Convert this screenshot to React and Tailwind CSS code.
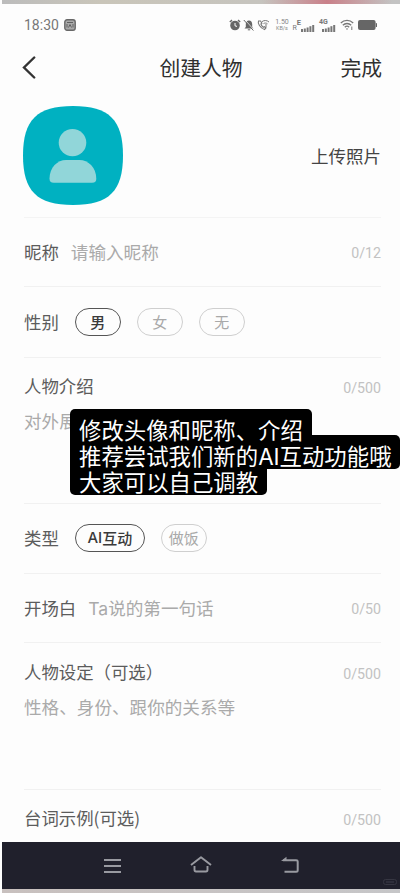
import React from 'react';
import clsx from 'clsx';

const Chip = ({ children, active, className }) => (
  <button
    className={clsx(
      'flex h-[28px] items-center justify-center rounded-full border text-[15px] leading-none',
      active ? 'border-[#555] font-medium text-[#3a3a3a]' : 'border-[#cfcfcf] text-[#a9a9a9]',
      className
    )}
  >
    {children}
  </button>
);

const Label = ({ children }) => (
  <span className="text-[17.4px] leading-[26px] whitespace-nowrap text-[#5c5c5c]">{children}</span>
);

const Placeholder = ({ children }) => (
  <span className="text-[17.6px] leading-[26px] whitespace-nowrap text-[#aaa]">{children}</span>
);

const Counter = ({ children }) => (
  <span className="mt-[2px] ml-auto font-['Roboto','Noto_Sans_CJK_SC',sans-serif] text-[14.2px] leading-[26px] text-[#c2c2c2]">
    {children}
  </span>
);

const Latin = ({ children }) => (
  <span className="font-['Inter',sans-serif] leading-none">{children}</span>
);

const Signal = () => (
  <svg width="14" height="7" viewBox="0 0 14 7" fill="#777">
    <rect x="0" y="4" width="2" height="3" />
    <rect x="2.8" y="3.5" width="2" height="3.5" />
    <rect x="5.6" y="2.5" width="2" height="4.5" />
    <rect x="8.4" y="1.2" width="2" height="5.8" />
    <rect x="11.2" y="0" width="2" height="7" />
  </svg>
);

const StatusBar = () => (
  <div className="flex h-[42px] items-center pr-[23px] pl-[22px] font-['Roboto',sans-serif] text-[#777]">
    <span className="w-[35px] text-[14px] leading-none">18:30</span>
    <svg className="ml-[5px]" width="12" height="12" viewBox="0 0 12 12" fill="none">
      <rect x="0.8" y="0.8" width="10.4" height="10.4" rx="2.2" fill="#aaa" stroke="#686868" strokeWidth="1.4" />
      <path d="M3 3.5h6M3 5v3.5M9 5v3.5M4.5 8.5L6 5.5l1.5 3" stroke="#606060" strokeWidth="1" />
    </svg>

    <div className="ml-auto flex items-center">
      {/* alarm */}
      <svg width="12" height="12" viewBox="0 0 12 12" fill="none">
        <circle cx="6" cy="6.5" r="4.8" fill="#666" />
        <path d="M0.8 3L3 1.1M11.2 3L9 1.1" stroke="#666" strokeWidth="1.4" />
        <path d="M6 4v2.8l2 .6" stroke="#fff" strokeWidth="1" />
      </svg>
      {/* muted bell */}
      <svg className="ml-[2px]" width="12" height="12" viewBox="0 0 12 12" fill="none">
        <path d="M1.5 9.5L2.8 8V5C2.8 3 4 1.7 6 1.5 8 1.7 9.2 3 9.2 5v3l1.3 1.5z" fill="#666" />
        <path d="M4.8 10.8h2.4" stroke="#666" strokeWidth="1" />
        <path d="M1.6 0.5L11 11" stroke="#fff" strokeWidth="0.8" />
        <path d="M0.8 1L10.4 11.5" stroke="#666" strokeWidth="1" />
      </svg>
      {/* call over wifi */}
      <svg className="ml-[2px]" width="13" height="12" viewBox="0 0 13 12" fill="none" stroke="#777">
        <path d="M1.5 2C.5 4 3 9 7.5 10.5l1.5-1.6-1.7-1.2-1.1.6C5 7.2 4.2 6 3.9 5l1-.9L3.5 2z" strokeWidth="1.1" />
        <path d="M5 2.6C7.2 1 10 1.2 12 3M6.5 4.6c1.3-.8 2.8-.7 4 .2M9 5v3" strokeWidth="1" />
      </svg>
      <div className="ml-[4px] w-[15px] text-center text-[7px] leading-[6.5px] text-[#888]">
        <p>1.50</p>
        <p className="text-[5.5px]">KB/s</p>
      </div>
      <div className="ml-[3px] flex h-[13px] items-end">
        <span className="text-[7px] leading-[7px]">R</span>
        <span className="self-start text-[7.5px] leading-[7px] font-bold">E</span>
        <Signal />
      </div>
      <div className="ml-[4px] flex h-[13px] w-[17px] flex-col items-start">
        <span className="h-[6px] text-[7px] leading-[6px] font-bold">4G</span>
        <div className="ml-[3px]">
          <Signal />
        </div>
      </div>
      <svg className="ml-[4px]" width="14" height="12" viewBox="0 0 14 12" fill="none" stroke="#777" strokeWidth="1.3">
        <path d="M.8 4C4.3.6 9.7.6 13.2 4M2.8 6.2c2.4-2.3 6-2.3 8.4 0M4.8 8.2c1.3-1.2 3.1-1.2 4.4 0" />
        <path d="M5.8 9.4h2.4L7 11z" fill="#777" stroke="none" />
        <path d="M11.8 7.5V11" strokeWidth="1" />
      </svg>
      <svg className="ml-[4px]" width="19" height="10" viewBox="0 0 19 10" fill="#666">
        <rect x="0" y="0" width="17.6" height="10" rx="2" />
        <rect x="17.8" y="3" width="1.2" height="4" rx="0.6" />
      </svg>
    </div>
  </div>
);

const NavBar = () => (
  <div className="flex h-[47px] shrink-0 items-center bg-[#20202c] pl-[102px]">
    <svg width="17" height="14" viewBox="0 0 17 14" stroke="#999aa1" strokeWidth="2">
      <path d="M0 1h17M0 7h17M0 13h17" />
    </svg>
    <svg className="-mt-[3px] ml-[69px]" width="22" height="18" viewBox="0 0 22 18" fill="none" stroke="#999aa1" strokeWidth="1.9">
      <path d="M1 10L11 2.2 21 10" strokeLinejoin="round" />
      <path d="M4.5 11v3.8c0 1 .5 1.7 1.5 1.7h10c1 0 1.5-.7 1.5-1.7V11" />
    </svg>
    <svg className="-mt-[3px] ml-[69px]" width="18" height="17" viewBox="0 0 18 17" fill="none">
      <path d="M2 4.2h13.2c1 0 1.5.5 1.5 1.4v8.6c0 .9-.5 1.5-1.5 1.5H3.5" stroke="#999aa1" strokeWidth="2" />
      <path d="M0 5L5.5 .8V5H0z" fill="#999aa1" />
    </svg>
    <svg className="mt-[32px] mr-[3px] ml-auto" width="14" height="6" viewBox="0 0 14 6" fill="none" stroke="#363642">
      <rect x="0.5" y="0.5" width="13" height="5" rx="2" />
      <path d="M3 3h8" strokeWidth="1.4" />
    </svg>
  </div>
);

const App = () => {
  return (
    <div className="relative flex h-[893px] w-[400px] flex-col overflow-hidden bg-[#fdfdfd] pl-[2px] font-['Noto_Sans_CJK_SC',sans-serif]">
      <div className="h-[4px] shrink-0 bg-linear-to-r from-[#bcbcbc] via-[#c9c5b9] via-25% to-[#c3c3c3]">
        <div className="ml-[260px] h-full w-[130px] bg-linear-to-r from-transparent via-[#c98089] to-transparent" />
      </div>
      <StatusBar />

      {/* Header */}
      <div className="flex h-[44px] items-center pr-[18px] pl-[20px] text-[20.8px] text-[#303030]">
        <svg className="w-[60px] shrink-0" height="24" viewBox="0 0 60 24" fill="none" stroke="#333" strokeWidth="2.4">
          <path d="M12.2 1.5L2 11.5l10.2 10" strokeLinecap="round" />
        </svg>
        <h1 className="flex-1 pr-[2px] text-center">创建人物</h1>
        <button className="w-[60px] text-right">完成</button>
      </div>

      {/* Form */}
      <div className="flex flex-1 flex-col pr-[19px] pl-[22px]">
        <div className="flex h-[128px] items-center border-b border-[#f4f4f4] pb-[2px]">
          <svg className="mt-[6px] -ml-px" width="100" height="99" viewBox="0 0 100 100" preserveAspectRatio="none">
            <path d="M50 0C86 0 100 14 100 50S86 100 50 100 0 86 0 50 14 0 50 0z" fill="#00b1c1" />
            <circle cx="49.5" cy="37" r="13.8" fill="#91d6d9" />
            <path
              d="M26.5 73.5C26.5 62 34.5 54.6 43 54.6h13.5c8.5 0 16.8 7.4 16.8 18.9 0 2.6-1.3 4-4.2 4H30.7c-2.9 0-4.2-1.4-4.2-4z"
              fill="#91d6d9"
            />
          </svg>
          <span className="mt-[7px] ml-auto text-[17.5px] text-[#444]">上传照片</span>
        </div>

        <div className="flex h-[69px] items-center border-b border-[#f1f1f1]">
          <Label>昵称</Label>
          <div className="ml-[12px] flex"><Placeholder>请输入昵称</Placeholder></div>
          <Counter>0/12</Counter>
        </div>

        <div className="flex h-[71px] items-center border-b border-[#f1f1f1] pb-px">
          <Label>性别</Label>
          <div className="ml-[16px] flex gap-[16px]">
            <Chip active className="w-[46px]">男</Chip>
            <Chip className="w-[46px]">女</Chip>
            <Chip className="w-[46px]">无</Chip>
          </div>
        </div>

        <div className="h-[146px] border-b border-[#f1f1f1] pt-[15px]">
          <div className="flex h-[26px]">
            <Label>人物介绍</Label>
            <Counter>0/500</Counter>
          </div>
          <div className="mt-[9px]"><Placeholder>对外展示</Placeholder></div>
        </div>

        <div className="flex h-[70px] items-center border-b border-[#f1f1f1] pb-[2px]">
          <Label>类型</Label>
          <div className="ml-[16px] flex gap-[16px]">
            <Chip active className="w-[70px]"><Latin>AI</Latin>互动</Chip>
            <Chip className="w-[46px]">做饭</Chip>
          </div>
        </div>

        <div className="flex h-[69px] items-center border-b border-[#f1f1f1]">
          <Label>开场白</Label>
          <div className="ml-[12px] flex"><Placeholder><Latin>Ta</Latin>说的第一句话</Placeholder></div>
          <Counter>0/50</Counter>
        </div>

        <div className="h-[147px] border-b border-[#f1f1f1] pt-[16px]">
          <div className="flex h-[26px]">
            <Label>人物设定（可选）</Label>
            <Counter>0/500</Counter>
          </div>
          <div className="mt-[9px]"><Placeholder>性格、身份、跟你的关系等</Placeholder></div>
        </div>

        <div className="flex h-[41px] pt-[15px]">
          <Label>台词示例(可选)</Label>
          <Counter>0/500</Counter>
        </div>
      </div>

      <NavBar />
      <div className="h-[4px] shrink-0 bg-linear-to-r from-[#c8c0be] to-[#c6c6c8]" />

      {/* Caption over the form */}
      <div className="absolute top-[409px] left-[70px] flex flex-col items-start text-[22.4px] leading-[26px] whitespace-nowrap text-white">
        <p className="h-[26px] w-[242px] rounded-t-[5px] bg-black pt-[7px] pl-[9px]">
          <span className="relative z-10">修改头像和昵称、介绍</span>
        </p>
        <p className="h-[34px] w-[330px] rounded-r-[5px] bg-black pt-[7px] pl-[9px]">
          <span className="relative z-10">推荐尝试我们新的<Latin>AI</Latin>互动功能哦</span>
        </p>
        <p className="h-[26px] w-[197px] rounded-b-[5px] bg-black pl-[9px]">
          <span className="relative -top-px z-10">大家可以自己调教</span>
        </p>
      </div>
    </div>
  );
};

export default App;
